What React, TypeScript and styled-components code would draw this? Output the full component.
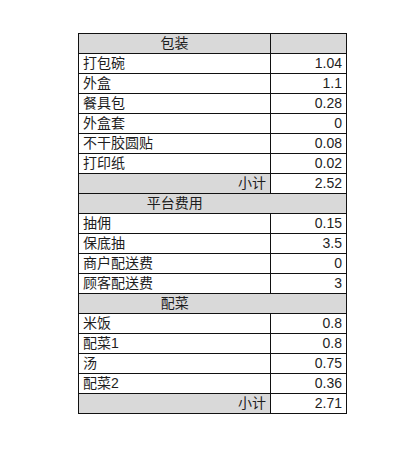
import { createGlobalStyle } from 'styled-components';
import styled from 'styled-components';

const GlobalStyle = createGlobalStyle`
  html, body {
    margin: 0;
    padding: 0;
    background: #fff;
  }
`;

const Page = styled.div`
  padding: 33px 0 0 78px;
  font-family: "Liberation Sans", "Noto Sans CJK SC", Arial, sans-serif;
  font-size: 14px;
  color: #1e1e1e;
`;

const Table = styled.table`
  border-collapse: collapse;
  width: 268px;
  table-layout: fixed;
`;

const Cell = styled.td<{ $gray?: boolean; $align?: 'left' | 'center' | 'right'; $noRight?: boolean }>`
  height: 19px;
  padding: 0 4px;
  line-height: 19px;
  border: 1px solid #111;
  ${p => p.$noRight && 'border-right-style: hidden;'}
  background: ${p => (p.$gray ? '#d9d9d9' : '#fff')};
  text-align: ${p => p.$align || 'left'};
  white-space: nowrap;
  overflow: hidden;
`;

interface Item { lbl: string, val: string }

interface Section {
  title: string,
  merged?: boolean,
  items: Item[],
  total?: string,
}

const sections: Section[] = [
  {
    title: '包装',
    items: [
      { lbl: '打包碗', val: '1.04' },
      { lbl: '外盒', val: '1.1' },
      { lbl: '餐具包', val: '0.28' },
      { lbl: '外盒套', val: '0' },
      { lbl: '不干胶圆贴', val: '0.08' },
      { lbl: '打印纸', val: '0.02' },
    ],
    total: '2.52',
  },
  {
    title: '平台费用',
    merged: true,
    items: [
      { lbl: '抽佣', val: '0.15' },
      { lbl: '保底抽', val: '3.5' },
      { lbl: '商户配送费', val: '0' },
      { lbl: '顾客配送费', val: '3' },
    ],
  },
  {
    title: '配菜',
    merged: true,
    items: [
      { lbl: '米饭', val: '0.8' },
      { lbl: '配菜1', val: '0.8' },
      { lbl: '汤', val: '0.75' },
      { lbl: '配菜2', val: '0.36' },
    ],
    total: '2.71',
  },
];

const App = () => {
  return (
    <>
      <GlobalStyle />
      <Page>
        <Table>
          <colgroup>
            <col style={{ width: 192 }} />
            <col style={{ width: 76 }} />
          </colgroup>
          <tbody>
            {sections.map((s) => (
              <SectionRows key={s.title} section={s} />
            ))}
          </tbody>
        </Table>
      </Page>
    </>
  );
};

const SectionRows = ({ section }: { section: Section }) => {
  const { title, merged, items, total } = section;
  return (
    <>
      <tr>
        <Cell $gray $align="center" $noRight={merged}>{title}</Cell>
        <Cell $gray />
      </tr>
      {items.map((row, index) => (
        <tr key={`${row.lbl}-${index}`}>
          <Cell>{row.lbl}</Cell>
          <Cell $align="right">{row.val}</Cell>
        </tr>
      ))}
      {total && (
        <tr>
          <Cell $gray $align="right">小计</Cell>
          <Cell $align="right">{total}</Cell>
        </tr>
      )}
    </>
  );
};

export default App;
